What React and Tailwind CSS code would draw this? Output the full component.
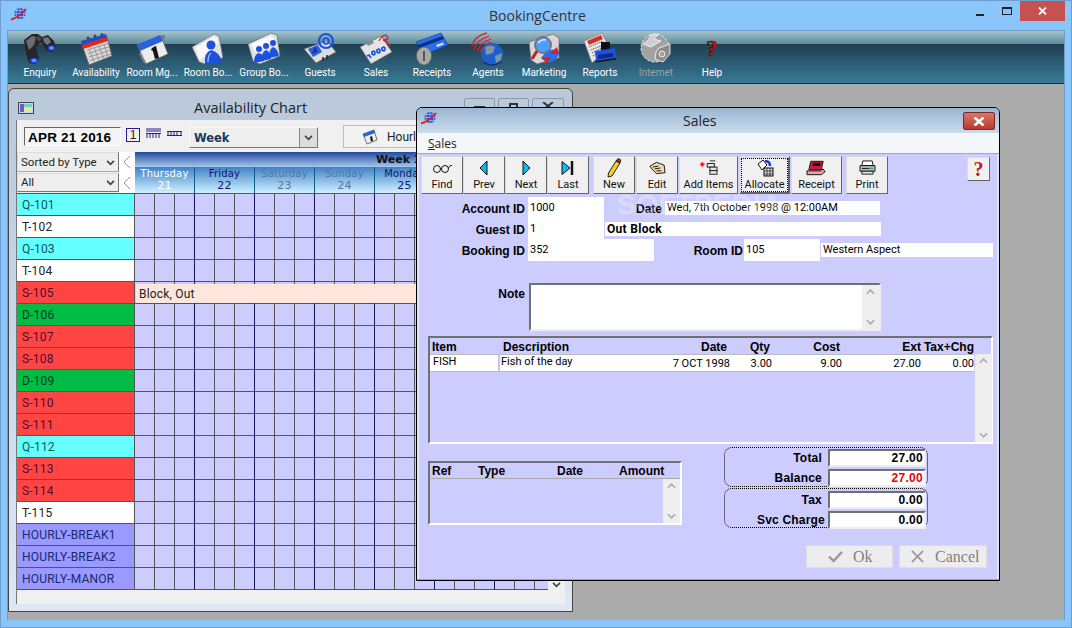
import React from 'react';

const Logo = ({ className = 'w-[18px] h-[14px]' }) => (
  <svg viewBox="0 0 18 14" className={className}>
    <circle cx="10" cy="6" r="5.5" fill="#2a4fd0" />
    <path d="M5 3h10M4.5 6h11M5 9h10M10 .5v11M7 1.5q-2 4.500 0 9M13 1.500q2 4.500 0 9" stroke="#a8c8ff" strokeWidth=".7" fill="none" />
    <path d="M1 13 Q9 11 17 2 L15 1 Q9 9 1 11z" fill="#e02020" />
  </svg>
);

const Binoculars = () => (
  <svg viewBox="0 0 34 34" className="w-[34px] h-[34px]">
    <path d="M1 8 L9 2 L15 2 L19 5 L25 3 L31 9 L33 16 L29 20 L24 19 L20 12 L17 11 L13 15 L16 27 L12 32 L6 31 L3 22z" fill="#26262a" />
    <path d="M3 9 L9 4 L13 5 L11 13 L6 18z" fill="#6c6c74" />
    <path d="M20 6 L25 5 L28 10 L24 13 L21 10z" fill="#74747c" />
    <path d="M14 4 L19 6 L17 9 L14 8z" fill="#4a4a50" />
    <ellipse cx="28.500" cy="16" rx="3.800" ry="2.800" fill="#1f4fe0" />
    <ellipse cx="28.500" cy="16" rx="1.800" ry="1.300" fill="#84a8ff" />
    <ellipse cx="11" cy="28.500" rx="4.200" ry="2.800" fill="#1f4fe0" />
    <ellipse cx="11" cy="28.500" rx="2" ry="1.300" fill="#84a8ff" />
  </svg>
);

const CalendarIcon = () => (
  <svg viewBox="0 0 34 34" className="w-[34px] h-[34px]">
    <path d="M3 13 L28 5 L33 24 L10 33z" fill="#d8d8d8" stroke="#555" strokeWidth=".8" />
    <path d="M3 13 L28 5 L29 9 L4 17z" fill="#e02818" />
    <path d="M2 9 L27 2 L28 5 L3 13z" fill="#2449c8" />
    <path d="M8 18 L30 11M9 21.500 L31 14.500M10 25 L32 18M11 28.500 L32 22M10 17 L15 30M15 15.500 L20 28.500M20 14 L25 27M25 12.500 L29 25" stroke="#8a8a8a" strokeWidth=".8" />
    <circle cx="9" cy="6" r="1.500" fill="#444" /><circle cx="16" cy="4" r="1.500" fill="#444" /><circle cx="23" cy="2.500" r="1.500" fill="#444" />
  </svg>
);

const RoomMgrIcon = () => (
  <svg viewBox="0 0 34 34" className="w-[34px] h-[34px]">
    <path d="M2 13 L26 4 L33 22 L11 32z" fill="#ececec" stroke="#555" strokeWidth=".8" />
    <path d="M2 13 L25 3 L28 9 L5 19z" fill="#2a5fe0" />
    <path d="M17 16 L21 14 L24 26 L20 27z" fill="#151515" />
    <path d="M16 17 L21 14 L21 17 L17 19z" fill="#151515" />
    <circle cx="28" cy="5" r="2" fill="#777" />
    <path d="M5 21 L10 31" stroke="#888" strokeWidth="2" />
  </svg>
);

const RoomBookIcon = () => (
  <svg viewBox="0 0 34 34" className="w-[34px] h-[34px]">
    <path d="M1 15 L23 2 L28 4 L32 26 L14 32 L8 30z" fill="#e2e2e2" stroke="#666" strokeWidth=".7" />
    <path d="M4 16 L22 5 L26 6 L27 12 L9 28z" fill="#f8f8f8" />
    <circle cx="20" cy="13" r="4.500" fill="#1c52e0" />
    <path d="M14 32 Q13 20 20 18 Q28 20 31 29 Q24 33 14 32z" fill="#1c52e0" />
    <path d="M17 30 Q17 23 20 21" stroke="#8fb4ff" strokeWidth="1.500" fill="none" />
  </svg>
);

const GroupIcon = () => (
  <svg viewBox="0 0 34 34" className="w-[34px] h-[34px]">
    <path d="M1 12 L24 1 L30 3 L33 24 L13 32 L6 29z" fill="#e2e2e2" stroke="#666" strokeWidth=".7" />
    <path d="M4 12 L23 4 L27 6 L28 10 L8 20z" fill="#fafafa" />
    <circle cx="12" cy="17" r="3" fill="#1c52e0" /><path d="M7 31 Q7 22 12 21 Q17 22 17 29z" fill="#1c52e0" />
    <circle cx="19" cy="14" r="3" fill="#1c52e0" /><path d="M15 29 Q14 20 19 18 Q24 20 24 27z" fill="#1c52e0" />
    <circle cx="26" cy="11" r="3" fill="#1c52e0" /><path d="M22 26 Q22 17 26 15 Q31 17 32 24z" fill="#1c52e0" />
  </svg>
);

const GuestsIcon = () => (
  <svg viewBox="0 0 34 34" className="w-[34px] h-[34px]">
    <path d="M1 17 L24 9 L33 20 L13 31z" fill="#dcdcdc" stroke="#666" strokeWidth=".7" />
    <path d="M5 17 L15 13 L19 20 L10 25z" fill="#2a5fe0" />
    <path d="M9 22 L12 14 L15 20z" fill="#123a9c" />
    <circle cx="23" cy="9" r="7" fill="none" stroke="#1c52e0" strokeWidth="2.200" />
    <circle cx="23" cy="9" r="2.800" fill="none" stroke="#1c52e0" strokeWidth="1.800" />
    <path d="M20 25 v4M24 23 v4" stroke="#222" strokeWidth="1.500" />
  </svg>
);

const SalesIcon = () => (
  <svg viewBox="0 0 34 34" className="w-[34px] h-[34px]">
    <path d="M1 15 L22 4 L33 20 L12 32z" fill="#e4e4e4" stroke="#666" strokeWidth=".7" />
    <path d="M7 11 L13 8 L15 11 L9 14z" fill="#888" />
    <path d="M8 24 l2-1 2 3M13 20 q3-2 3 1 t-3 1zM18 18 q3-2 3 1 t-3 1zM23 16 q3-2 3 1 t-3 1z" stroke="#1c52e0" strokeWidth="1.700" fill="none" />
    <path d="M20 9 Q24 1 28 4 Q31 8 24 8 Q29 9 31 15" stroke="#d82020" strokeWidth="1.300" fill="none" />
  </svg>
);

const ReceiptsIcon = () => (
  <svg viewBox="0 0 34 34" className="w-[34px] h-[34px]">
    <path d="M1 10 L26 1 L33 13 L9 23z" fill="#2a6fe8" stroke="#123a9c" strokeWidth=".6" />
    <path d="M2.500 13 L27.500 4 L29 7 L4 16z" fill="#0d2f80" />
    <path d="M21 13 l7-2.500 1 2-7 2.500z" fill="#cfe0ff" />
    <ellipse cx="9" cy="24" rx="7.500" ry="9" fill="#a8a8a8" stroke="#666" strokeWidth=".7" />
    <path d="M9 19 v10" stroke="#555" strokeWidth="2" />
  </svg>
);

const AgentsIcon = () => (
  <svg viewBox="0 0 34 34" className="w-[34px] h-[34px]">
    <path d="M1 14 Q3 4 16 1M3 17 Q6 8 18 4M6 19 Q9 11 20 7M9 20 Q12 13 20 10" stroke="#e02020" strokeWidth="1.300" fill="none" />
    <circle cx="21" cy="22" r="11" fill="#1f5fc8" />
    <path d="M14 15 Q20 12 24 15 L22 21 L15 23z" fill="#7f95a8" />
    <path d="M24 24 L31 21 L30 28 L25 31z" fill="#7f95a8" />
    <path d="M12 30 Q21 36 30 30" stroke="#0c2f78" strokeWidth="1.500" fill="none" />
  </svg>
);

const MarketingIcon = () => (
  <svg viewBox="0 0 34 34" className="w-[34px] h-[34px]">
    <path d="M2 10 L26 2 L32 6 L32 26 L10 32 L4 28z" fill="#d8d8d8" stroke="#666" strokeWidth=".7" />
    <circle cx="16" cy="13" r="8" fill="#4f9dff" stroke="#777" strokeWidth="2" />
    <path d="M11 11 Q14 7 19 8" stroke="#cfe6ff" strokeWidth="1.500" fill="none" />
    <path d="M10 19 L5 27" stroke="#c02020" strokeWidth="3" />
    <path d="M14 26 Q22 14 32 19 Q33 27 22 31z" fill="#2a6fe8" />
    <path d="M22 22 L30 15 L32 22z" fill="#e02020" />
    <path d="M14 26 L20 31 L24 25z" fill="#e02020" />
  </svg>
);

const ReportsIcon = () => (
  <svg viewBox="0 0 34 34" className="w-[34px] h-[34px]">
    <path d="M1 9 L19 1 L26 15 L9 31z" fill="#e8e8e8" stroke="#777" strokeWidth=".7" />
    <path d="M4 9 L18 3 L20 7 L6 13z" fill="#d03030" />
    <path d="M6 15 L20 9M8 18 L20 13M9 21 L19 16M10 24 L16 20" stroke="#777" strokeWidth="1.200" strokeDasharray="1.500 .7" />
    <rect x="18" y="10" width="9" height="8" fill="#111" />
    <path d="M12 19 L32 16 L33 26 L13 29z" fill="#2050e0" />
    <path d="M15 23 L30 21 L30 25 L15 27z" fill="#0c2a8a" />
    <path d="M13 29 L33 26 L33 27.500 L13 30.500z" fill="#111" />
  </svg>
);

const InternetIcon = () => (
  <svg viewBox="0 0 34 34" className="w-[34px] h-[34px]">
    <circle cx="16" cy="16" r="14" fill="#a2a2a2" stroke="#fff" strokeWidth=".8" strokeDasharray="3 1.500" />
    <path d="M4 12 Q10 9 12 3 L20 2 L15 7 L22 9 L12 15z" fill="#cfcfcf" stroke="#fff" strokeWidth=".7" />
    <path d="M20 16 L31 12 L31 22 L24 30 L16 27 L17 20z" fill="#8c8c8c" stroke="#fff" strokeWidth=".8" />
    <circle cx="23" cy="22" r="3" fill="#a2a2a2" stroke="#fff" strokeWidth=".8" />
  </svg>
);

const HelpBigIcon = () => (
  <svg viewBox="0 0 34 34" className="w-[34px] h-[34px]">
    <text x="17" y="24" textAnchor="middle" fontSize="24" fontWeight="700" fontFamily="Liberation Serif, serif" fill="#c81818" stroke="#300" strokeWidth=".5">?</text>
  </svg>
);

const mainTools = [
  { label: 'Enquiry', Icon: Binoculars },
  { label: 'Availability', Icon: CalendarIcon },
  { label: 'Room Mg...', Icon: RoomMgrIcon },
  { label: 'Room Bo...', Icon: RoomBookIcon },
  { label: 'Group Bo...', Icon: GroupIcon },
  { label: 'Guests', Icon: GuestsIcon },
  { label: 'Sales', Icon: SalesIcon },
  { label: 'Receipts', Icon: ReceiptsIcon },
  { label: 'Agents', Icon: AgentsIcon },
  { label: 'Marketing', Icon: MarketingIcon },
  { label: 'Reports', Icon: ReportsIcon },
  { label: 'Internet', Icon: InternetIcon, disabled: true },
  { label: 'Help', Icon: HelpBigIcon }
];

const rooms = [
  { name: 'Q-101', row: 'bg-[#66ffff] text-[#005a5a]' },
  { name: 'T-102', row: 'bg-white text-[#222]' },
  { name: 'Q-103', row: 'bg-[#66ffff] text-[#005a5a]' },
  { name: 'T-104', row: 'bg-white text-[#222]' },
  { name: 'S-105', row: 'bg-[#ff4444] text-[#4a1030]', block: true },
  { name: 'D-106', row: 'bg-[#00bb44] text-[#003a20]' },
  { name: 'S-107', row: 'bg-[#ff4444] text-[#4a1030]' },
  { name: 'S-108', row: 'bg-[#ff4444] text-[#4a1030]' },
  { name: 'D-109', row: 'bg-[#00bb44] text-[#003a20]' },
  { name: 'S-110', row: 'bg-[#ff4444] text-[#4a1030]' },
  { name: 'S-111', row: 'bg-[#ff4444] text-[#4a1030]' },
  { name: 'Q-112', row: 'bg-[#66ffff] text-[#005a5a]' },
  { name: 'S-113', row: 'bg-[#ff4444] text-[#4a1030]' },
  { name: 'S-114', row: 'bg-[#ff4444] text-[#4a1030]' },
  { name: 'T-115', row: 'bg-white text-[#222]' },
  { name: 'HOURLY-BREAK1', row: 'bg-[#9999ff] text-[#1a2a70]' },
  { name: 'HOURLY-BREAK2', row: 'bg-[#9999ff] text-[#1a2a70]' },
  { name: 'HOURLY-MANOR', row: 'bg-[#9999ff] text-[#1a2a70]' }
];

const days = [
  { name: 'Thursday', num: '21', cls: 'text-white' },
  { name: 'Friday', num: '22', cls: 'text-[#14146a]' },
  { name: 'Saturday', num: '23', cls: 'text-[#55779f]' },
  { name: 'Sunday', num: '24', cls: 'text-[#55779f]' },
  { name: 'Monday', num: '25', cls: 'text-[#14146a]' },
  { name: 'Tuesday', num: '26', cls: 'text-[#14146a]' },
  { name: 'Wednesday', num: '27', cls: 'text-[#14146a]' }
];

const cells = Array.from({ length: 21 }, (_, i) => i);

const Chevron = ({ className = '' }) => (
  <svg viewBox="0 0 10 7" className={`w-[9px] h-[6px] ${className}`}>
    <path d="M1 1 L5 5 L9 1" stroke="#444" strokeWidth="2" fill="none" />
  </svg>
);

const RoomRow = ({ room }) => (
  <div className="flex h-[22px] relative">
    <div className={`w-[118px] shrink-0 h-full border-b border-r border-[#555] pl-[5px] flex items-center text-[12px] tracking-[.2px] font-['Roboto',sans-serif] ${room.row}`}>
      {room.name}
    </div>
    {cells.map((c) => (
      <div
        key={c}
        className={`w-[20px] shrink-0 h-full bg-[#ccccff] border-b border-b-[#555] border-r ${c % 3 === 2 ? 'border-r-[#14145a]' : 'border-r-[#555]'}`}
      />
    ))}
    {room.block && (
      <div className="absolute left-[119px] top-[2px] w-[300px] h-[19px] bg-[#ffe6dc] pl-[3px] text-[12px] tracking-[.2px] text-[#222] flex items-center font-['Roboto',sans-serif]">
        Block, Out
      </div>
    )}
  </div>
);

const AvailabilityWindow = () => (
  <div className="absolute left-0 top-[4px] w-[565px] h-[524px] border border-[#444] rounded-t-[6px] bg-linear-to-b from-[#b9c9da] to-[#dde8f4] flex flex-col">
    <div className="h-[31px] flex relative shrink-0">
      <svg viewBox="0 0 16 12" className="w-[16px] h-[12px] ml-[9px] mt-[13px]">
        <rect x=".5" y=".5" width="15" height="11" fill="#c8d8ee" stroke="#444" />
        <rect x="2" y="2" width="4" height="8" fill="#6a5ad8" />
        <rect x="6" y="2" width="8" height="3" fill="#70d0d0" />
        <rect x="6" y="6" width="8" height="4" fill="#e8e890" />
      </svg>
      <div className="absolute left-[185px] top-[9px] text-[14.5px] leading-[20px] text-[#222] font-['Open_Sans',sans-serif]">Availability Chart</div>
      <div className="absolute left-[455px] top-[9px] flex gap-[3px]">
        <div className="w-[31px] h-[22px] border border-[#8a9aaa] rounded-[2px] flex justify-center pt-[7px]"><div className="w-[11px] h-[3px] bg-[#333]" /></div>
        <div className="w-[31px] h-[22px] border border-[#8a9aaa] rounded-[2px] flex justify-center pt-[4px]"><div className="w-[9px] h-[8px] border-2 border-[#333]" /></div>
        <div className="w-[32px] h-[22px] border border-[#8a9aaa] rounded-[2px] flex justify-center pt-[3px]">
          <svg viewBox="0 0 12 8" className="w-[12px] h-[8px]"><path d="M1 0 L11 8 M11 0 L1 8" stroke="#333" strokeWidth="2" /></svg>
        </div>
      </div>
    </div>
    <div className="ml-[7px] w-[549px] h-[484px] bg-[#f0f0f0] border-l border-[#777] flex flex-col overflow-hidden">
      {/* date / view toolbar */}
      <div className="h-[32px] shrink-0 flex items-start pt-[7px] pl-[7px]">
        <div className="w-[97px] h-[19px] border border-t-[#666] border-l-[#666] border-b-white border-r-white bg-[#f4f4f4] pl-[3px] text-[13.5px] leading-[19px] font-bold text-black tracking-[.2px] whitespace-nowrap">APR 21 2016</div>
        <div className="ml-[5px] w-[14px] h-[14px] mt-[1px] border border-[#2a1a90] flex items-center justify-center text-[12px] leading-none text-[#222]">1</div>
        <svg viewBox="0 0 15 10" className="ml-[6px] mt-[1px] w-[15px] h-[10px]">
          <path d="M0 1h15M0 3h15M0 5.500h15" stroke="#2a1a90" />
          <path d="M1 5v5M4 5v5M7 5v5M10 5v5M13 5v5" stroke="#2a1a90" />
        </svg>
        <svg viewBox="0 0 15 6" className="ml-[6px] mt-[4px] w-[15px] h-[6px]">
          <path d="M0 .5h15M0 4.500h15M1 0v5M4 0v5M7 0v5M10 0v5M14 0v5" stroke="#2a1a90" />
        </svg>
        <div className="ml-[7px] w-[129px] h-[21px] border border-t-[#f8f8f8] border-l-[#f8f8f8] border-r-[#777] border-b-[#777] bg-[#eee] flex items-center pl-[4px] pt-[2px] relative text-[11.5px] font-bold text-[#17375e] font-['DejaVu_Sans',sans-serif]">
          Week
          <div className="absolute right-0 top-0 bottom-0 w-[18px] border-l border-[#888] bg-[#ddd] flex items-center justify-center"><Chevron /></div>
        </div>
        <div className="ml-[25px] -mt-[2px] w-[90px] h-[23px] border border-[#bbb] bg-[#f2f2f2] flex items-center pl-[18px] gap-[9px] text-[12px] text-[#222] font-['Roboto',sans-serif]">
          <svg viewBox="0 0 16 16" className="w-[16px] h-[16px] shrink-0">
            <path d="M1 5 L12 1 L15 11 L5 15z" fill="#eee" stroke="#555" strokeWidth=".8" />
            <path d="M1 5 L12 1 L13 4 L2 8z" fill="#2a5fe0" />
            <path d="M8 8 l2-1 1 5-2 .500z" fill="#111" />
          </svg>
          Hourly
        </div>
      </div>

      <div className="h-[41px] shrink-0 flex">
        <div className="w-[102px] shrink-0 flex flex-col text-[11.5px] text-[#222] font-['Roboto',sans-serif]">
          <div className="h-[20px] border border-t-[#ddd] border-l-[#ddd] border-r-[#777] border-b-[#8ab0e0] bg-[#eee] flex items-center justify-between pl-[3px] pr-[3px] pt-[2px] whitespace-nowrap">Sorted by Type<Chevron /></div>
          <div className="h-[19px] mt-[1px] border border-t-[#ddd] border-l-[#ddd] border-r-[#777] border-b-[#777] bg-[#eee] flex items-center justify-between pl-[3px] pr-[3px] pt-[1px]">All<Chevron /></div>
        </div>
        <div className="w-[16px] shrink-0 bg-white flex flex-col items-center justify-around">
          <svg viewBox="0 0 8 14" className="w-[8px] h-[14px]"><path d="M7 1 L1 7 L7 13" stroke="#999" fill="none" /></svg>
          <svg viewBox="0 0 8 14" className="w-[8px] h-[14px]"><path d="M7 1 L1 7 L7 13" stroke="#999" fill="none" /></svg>
        </div>
        <div className="flex-1 flex flex-col overflow-hidden">
          <div className="h-[15px] shrink-0 bg-linear-to-b from-[#24489a] to-[#a8c8ee] pl-[241px] text-[11px] leading-[16px] font-bold text-[#111] font-['DejaVu_Sans',sans-serif] whitespace-nowrap">Week 17</div>
          <div className="h-[26px] shrink-0 flex bg-linear-to-b from-[#3e82c6] to-[#d2f2ff]">
            {days.map((d) => (
              <div key={d.num} className={`w-[60px] shrink-0 border-r border-[#0a5f8a] text-center text-[10px] leading-[12px] pt-[1px] tracking-[.2px] whitespace-nowrap font-['DejaVu_Sans',sans-serif] ${d.cls}`}>
                <div>{d.name}</div>
                <div className="text-[11px]">{d.num}</div>
              </div>
            ))}
          </div>
        </div>
      </div>

      <div className="flex shrink-0 h-[411px]">
        <div className="w-[531px] overflow-hidden shrink-0">
          <div className="border-t border-[#555]">
            {rooms.map((r) => (
              <RoomRow key={r.name} room={r} />
            ))}
          </div>
        </div>
        <div className="w-[17px] shrink-0 flex flex-col justify-end items-center pb-[16px]">
          <Chevron />
        </div>
      </div>
    </div>
  </div>
);

const ToolBtn = ({ w, label, focused, children }) => (
  <div className={`${w} h-[38px] shrink-0 bg-[#f0f0f0] border border-t-[#ddd] border-l-[#ddd] border-b-[#666] border-r-[#666] flex flex-col items-center text-[11px] text-[#111] font-['Roboto',sans-serif] whitespace-nowrap ${focused ? 'outline-1 outline-dotted outline-black -outline-offset-3 border-[#555] border-2' : ''}`}>
    <div className={`${focused ? 'h-[20px]' : 'h-[21px]'} flex items-center justify-center shrink-0`}>{children}</div>
    <div className="leading-[13px]">{label}</div>
  </div>
);

const Glasses = () => (
  <svg viewBox="0 0 20 12" className="w-[20px] h-[12px]">
    <circle cx="5" cy="7" r="3.500" fill="none" stroke="#111" /><circle cx="13" cy="7" r="3.500" fill="none" stroke="#111" />
    <path d="M8.500 7 Q9 5.500 9.500 7 M16.500 6 L19 3 L20 4" stroke="#111" fill="none" />
  </svg>
);

const PrevIcon = () => (
  <svg viewBox="0 0 10 16" className="w-[10px] h-[16px]"><path d="M8 1 L1 8 L8 15z" fill="#14b8f0" stroke="#111" /></svg>
);
const NextIcon = () => (
  <svg viewBox="0 0 10 16" className="w-[10px] h-[16px]"><path d="M2 1 L9 8 L2 15z" fill="#14b8f0" stroke="#111" /></svg>
);
const LastIcon = () => (
  <svg viewBox="0 0 14 16" className="w-[14px] h-[16px]"><path d="M1 1.500 L9 8 L1 14.500z" fill="#14b8f0" stroke="#111" /><path d="M11 1v14" stroke="#111" strokeWidth="2.500" /></svg>
);
const Pencil = () => (
  <svg viewBox="0 0 14 20" className="w-[14px] h-[20px]">
    <path d="M9 3 L13 5 L5 18 L1 19 L1.500 15z" fill="#f0d020" stroke="#111" strokeWidth=".9" />
    <path d="M9 3 L11 .5 L14 2 L13 5z" fill="#a03030" stroke="#111" strokeWidth=".8" />
  </svg>
);
const EditHand = () => (
  <svg viewBox="0 0 18 14" className="w-[17px] h-[14px]">
    <path d="M1 5 L8 1 L16 4 L17 12 L8 13 L3 8z" fill="#f4d8b0" stroke="#111" />
    <path d="M4 6 L10 5 M6 8 L12 7 M8 10 L13 10" stroke="#111" />
  </svg>
);
const AddItemsIcon = () => (
  <svg viewBox="0 0 22 18" className="w-[20px] h-[16px]">
    <path d="M1 5h5M3.500 2.500v5" stroke="#e01818" strokeWidth="2" />
    <rect x="9" y="4" width="8" height="4" fill="#e8e8e8" stroke="#111" />
    <rect x="12" y="8" width="8" height="4" fill="#e8e8e8" stroke="#111" />
    <rect x="12" y="12" width="8" height="4" fill="#e8e8e8" stroke="#111" />
    <path d="M12 1h6" stroke="#111" />
  </svg>
);
const AllocateIcon = () => (
  <svg viewBox="0 0 18 18" className="w-[18px] h-[18px]">
    <path d="M2 5 L7 1 L11 6 L6 11z" fill="#fff" stroke="#111" />
    <path d="M9 2 Q14 2 14 7" stroke="#1040e0" strokeWidth="2.500" fill="none" />
    <rect x="8" y="9" width="9" height="8" fill="#e0e0e0" stroke="#111" />
    <path d="M8 12h9M8 15h9M11 9v8M14 9v8" stroke="#111" strokeWidth=".7" />
  </svg>
);
const ReceiptIcon = () => (
  <svg viewBox="0 0 22 16" className="w-[21px] h-[16px]">
    <path d="M5 1 L18 1 L16 10 L3 10z" fill="#d81838" stroke="#111" />
    <rect x="7" y="2.500" width="8" height="3.500" fill="#111" />
    <path d="M1 11 L15 11 L18 9 L20 12 L16 15 L1 15z" fill="#f0a0a8" stroke="#111" />
  </svg>
);
const PrintIcon = () => (
  <svg viewBox="0 0 18 16" className="w-[17px] h-[15px]">
    <path d="M4 1 L14 1 L15 6 L3 6z" fill="#fff" stroke="#111" />
    <path d="M1 6 L17 6 L17 12 L1 12z" fill="#bbb" stroke="#111" />
    <path d="M3 9h8" stroke="#111" /><path d="M12 9h3" stroke="#20c040" strokeWidth="1.500" />
    <path d="M3 12 L15 12 L15 15 L3 15z" fill="#eee" stroke="#111" />
  </svg>
);

const Field = ({ className = '', children }) => (
  <div className={`bg-white flex items-center pl-[2px] text-[11px] text-black shrink-0 whitespace-nowrap font-['Roboto',sans-serif] ${className}`}>{children}</div>
);

const Label = ({ w, children }) => (
  <div className={`${w} shrink-0 text-right text-[12px] font-bold text-black pt-[1px]`}>{children}</div>
);

const ScrollArrows = ({ className = '' }) => (
  <div className={`w-[17px] shrink-0 bg-[#eeeeee] flex flex-col justify-between items-center py-[4px] ${className}`}>
    <svg viewBox="0 0 10 6" className="w-[9px] h-[6px]"><path d="M1 5 L5 1 L9 5" stroke="#aaa" strokeWidth="1.800" fill="none" /></svg>
    <svg viewBox="0 0 10 6" className="w-[9px] h-[6px]"><path d="M1 1 L5 5 L9 1" stroke="#aaa" strokeWidth="1.800" fill="none" /></svg>
  </div>
);

const Amount = ({ label, value, red, labelPr = 'pr-[6px]' }) => (
  <div className="flex items-center h-[18px]">
    <div className={`w-[103px] text-right text-[12px] font-bold tracking-[.2px] text-black whitespace-nowrap ${labelPr}`}>{label}</div>
    <div className={`w-[98px] h-full bg-white border-2 border-t-[#707070] border-l-[#707070] border-r-[#eee] border-b-[#eee] text-right pr-[1px] text-[12px] leading-[15px] font-bold tracking-[.3px] ${red ? 'text-[#ee0000]' : 'text-black'}`}>{value}</div>
  </div>
);

const SalesWindow = () => (
  <div className="absolute left-[408px] top-[23px] w-[584px] h-[474px] border border-black rounded-t-[6px] flex flex-col overflow-hidden bg-[#ccccff]">
    <div className="h-[25px] shrink-0 bg-linear-to-b from-[#9ab6d2] to-[#cadcec] flex relative">
      <Logo className="ml-[3px] mt-[3px] w-[18px] h-[15px]" />
      <div className="absolute left-[266px] top-[3px] text-[14px] leading-[20px] text-[#222] font-['Open_Sans',sans-serif]">Sales</div>
      <div className="absolute right-[4px] top-[4px] w-[32px] h-[18px] bg-linear-to-b from-[#d8766a] to-[#b83a2c] border border-[#7a2a24] rounded-[2px] flex items-center justify-center">
        <svg viewBox="0 0 12 9" className="w-[12px] h-[9px]"><path d="M1.500 .5 L10.500 8.500 M10.500 .5 L1.500 8.500" stroke="#fff" strokeWidth="2.600" /></svg>
      </div>
    </div>
    <div className="h-[21px] shrink-0 bg-[#f4f7fa] border-b border-[#aaa] pl-[11px] text-[12px] leading-[21px] text-[#222] font-['Open_Sans',sans-serif]">
      <span className="underline">S</span>ales
    </div>

    <div className="flex-1 flex flex-col border-x-2 border-x-[#dbe7f3] relative">
      <div className="absolute z-10 left-[198px] top-[37px] text-[28px] leading-[28px] font-bold tracking-[.5px] text-white/30 whitespace-nowrap pointer-events-none">SOFTPEDIA</div>
      {/* record toolbar */}
      <div className="flex pl-[2px] pt-[2px] shrink-0">
        <ToolBtn w="w-[42px]" label="Find"><Glasses /></ToolBtn>
        <ToolBtn w="w-[42px]" label="Prev"><PrevIcon /></ToolBtn>
        <ToolBtn w="w-[42px]" label="Next"><NextIcon /></ToolBtn>
        <ToolBtn w="w-[42px]" label="Last"><LastIcon /></ToolBtn>
        <div className="w-[4px] shrink-0" />
        <ToolBtn w="w-[42px]" label="New"><Pencil /></ToolBtn>
        <div className="w-[1px] shrink-0" />
        <ToolBtn w="w-[42px]" label="Edit"><EditHand /></ToolBtn>
        <div className="w-[1px] shrink-0" />
        <ToolBtn w="w-[59px]" label="Add Items"><AddItemsIcon /></ToolBtn>
        <div className="w-[1px] shrink-0" />
        <ToolBtn w="w-[51px]" label="Allocate" focused><AllocateIcon /></ToolBtn>
        <div className="w-[1px] shrink-0" />
        <ToolBtn w="w-[51px]" label="Receipt"><ReceiptIcon /></ToolBtn>
        <div className="w-[4px] shrink-0" />
        <ToolBtn w="w-[42px]" label="Print"><PrintIcon /></ToolBtn>
        <div className="ml-[79px] mt-[1px] w-[23px] h-[24px] bg-[#f0f0f0] border border-t-[#ddd] border-l-[#ddd] border-b-[#666] border-r-[#666] flex items-center justify-center text-[20px] font-bold text-[#c01818] font-['Liberation_Serif',serif]">?</div>
      </div>

      {/* account fields */}
      <div className="flex items-center h-[22px] mt-[3px] shrink-0">
        <Label w="w-[106px]">Account ID</Label>
        <Field className="ml-[3px] w-[76px] h-full items-start pt-[3px]">1000</Field>
        <Label w="w-[58px]">Date</Label>
        <Field className="ml-[3px] w-[215px] h-[14px]">Wed, 7th October 1998 @ 12:00AM</Field>
      </div>
      <div className="flex items-center h-[20px] shrink-0">
        <Label w="w-[106px]">Guest ID</Label>
        <Field className="ml-[3px] w-[76px] h-full">1</Field>
        <Field className="ml-[1px] w-[276px] h-[14px]"><span className="text-[12px] font-bold tracking-[.3px]">Out Block</span></Field>
      </div>
      <div className="flex items-center h-[22px] shrink-0">
        <Label w="w-[106px]">Booking ID</Label>
        <Field className="ml-[3px] w-[126px] h-full">352</Field>
        <Label w="w-[89px]">Room ID</Label>
        <Field className="ml-[1px] w-[76px] h-full">105</Field>
        <Field className="ml-[1px] w-[172px] h-[14px]">Western Aspect</Field>
      </div>

      {/* note */}
      <div className="flex mt-[22px] h-[48px] shrink-0">
        <div className="w-[106px] shrink-0 text-right text-[12px] font-bold text-black pt-[2px]">Note</div>
        <div className="ml-[4px] w-[352px] flex border-2 border-t-[#707070] border-l-[#707070] border-r-[#eee] border-b-[#eee] bg-white">
          <div className="flex-1" />
          <ScrollArrows />
        </div>
      </div>

      {/* sale items */}
      <div className="ml-[9px] mt-[5px] w-[565px] h-[108px] shrink-0 border-2 border-t-[#707070] border-l-[#707070] border-r-white border-b-white flex flex-col">
        <div className="h-[14px] mt-[2px] shrink-0 grid grid-cols-[70px_139px_91px_42px_70px_79px_53px] text-[12px] font-bold text-black leading-[14px] whitespace-nowrap">
          <div className="pl-[2px]">Item</div>
          <div className="pl-[3px]">Description</div>
          <div className="text-right pr-[3px]">Date</div>
          <div className="text-right pr-[2px]">Qty</div>
          <div className="text-right pr-[2px]">Cost</div>
          <div className="text-right">Ext</div>
          <div className="text-right">Tax+Chg</div>
        </div>
        <div className="flex-1 flex min-h-0">
          <div className="w-[544px] shrink-0 flex flex-col">
            <div className="h-[18px] border-y border-[#bbb] bg-white grid grid-cols-[70px_139px_91px_42px_70px_79px_53px] text-[11px] leading-[14px] text-black whitespace-nowrap font-['Roboto',sans-serif]">
              <div className="pl-[3px] border-r-2 border-[#c4c4ee]">FISH</div>
              <div className="pl-[1px]">Fish of the day</div>
              <div className="text-right pt-[2px]">7 OCT 1998</div>
              <div className="text-right pt-[2px]">3.00</div>
              <div className="text-right pt-[2px]">9.00</div>
              <div className="text-right pt-[2px]">27.00</div>
              <div className="text-right pt-[2px]">0.00</div>
            </div>
          </div>
          <ScrollArrows className="ml-[1px]" />
        </div>
      </div>

      {/* refs and totals */}
      <div className="flex ml-[9px] mt-[3px] h-[81px] shrink-0">
        <div className="w-[254px] h-[64px] mt-[14px] border-2 border-t-[#707070] border-l-[#707070] border-r-white border-b-white flex flex-col shrink-0">
          <div className="h-[16px] shrink-0 border-b border-[#aaa] grid grid-cols-[48px_68px_66px_50px] text-[12px] font-bold leading-[17px] text-black whitespace-nowrap">
            <div className="pl-[2px]">Ref</div>
            <div>Type</div>
            <div className="pl-[11px]">Date</div>
            <div className="pl-[7px]">Amount</div>
          </div>
          <div className="flex-1 flex justify-end min-h-0">
            <ScrollArrows />
          </div>
        </div>
        <div className="ml-[42px] w-[204px] flex flex-col gap-[1px]">
          <div className="h-[40px] border border-dotted border-black rounded-[8px] flex flex-col pt-[1px]">
            <Amount label="Total" value="27.00" />
            <div className="h-[2px] shrink-0" />
            <Amount label="Balance" value="27.00" red />
          </div>
          <div className="h-[40px] border border-dotted border-black rounded-[8px] flex flex-col pt-[2px]">
            <Amount label="Tax" value="0.00" />
            <div className="h-[2px] shrink-0" />
            <Amount label="Svc Charge" value="0.00" labelPr="pr-[3px]" />
          </div>
        </div>
      </div>

      {/* dialog buttons */}
      <div className="flex justify-end gap-[6px] pr-[10px] mt-[17px] shrink-0 text-[16px] font-['Liberation_Serif',serif] text-[#808080]">
        <div className="w-[87px] h-[23px] bg-[#ededed] border border-[#ddd] flex items-center pl-[21px] gap-[10px]">
          <svg viewBox="0 0 16 14" className="w-[15px] h-[13px]"><path d="M1 7 L6 12 L15 2" stroke="#999" strokeWidth="2.500" fill="none" /></svg>
          Ok
        </div>
        <div className="w-[88px] h-[23px] bg-[#ededed] border border-[#ddd] flex items-center pl-[11px] gap-[11px]">
          <svg viewBox="0 0 14 14" className="w-[13px] h-[13px]"><path d="M1 1 L13 13 M13 1 L1 13" stroke="#999" strokeWidth="1.800" /></svg>
          Cancel
        </div>
      </div>
    </div>
    <div className="h-[1px] bg-[#40c8d8] shrink-0" />
  </div>
);

export default function App() {
  return (
    <div className="w-[1072px] h-[628px] overflow-hidden bg-[#8ac5fb] border border-[#6d9fcc] flex flex-col font-['Liberation_Sans',sans-serif]">
      <div className="h-[29px] shrink-0 flex relative">
        <Logo className="ml-[9px] mt-[6px] w-[18px] h-[15px]" />
        <div className="absolute left-[488px] top-[5px] text-[14px] leading-[20px] text-[#333] font-['Open_Sans',sans-serif]">BookingCentre</div>
        <div className="absolute right-[6px] top-0 flex items-start">
          <div className="w-[26px] h-[20px] flex items-center justify-center mr-[2px]"><div className="w-[8px] h-[2px] bg-[#222] mt-[7px]" /></div>
          <div className="w-[24px] h-[20px] flex items-center justify-center mr-[1px]"><div className="w-[10px] h-[8px] border border-t-2 border-[#222]" /></div>
          <div className="w-[45px] h-[20px] bg-[#c75050] flex items-center justify-center">
            <svg viewBox="0 0 9 8" className="w-[9px] h-[8px]"><path d="M1 .5 L8 7.500 M8 .5 L1 7.500" stroke="#fff" strokeWidth="1.800" /></svg>
          </div>
        </div>
      </div>
      <div className="mx-[6px] flex-1 flex flex-col border-x border-t border-[#6d9fcc] mb-[7px]">
        <div className="h-[53px] shrink-0 flex pl-[4px] bg-[linear-gradient(to_bottom,#a6c3c9_0,#5c8a9e_13px,#1f3e4f_13px,#3a7a98_52px)] border-b border-[#123040] font-['Roboto',sans-serif]">
          {mainTools.map(({ label, Icon, disabled }) => (
            <div key={label} className="w-[56px] shrink-0 flex flex-col items-center pt-[1px]">
              <div className="h-[34px] shrink-0"><Icon /></div>
              <div className={`text-[10px] leading-[14px] whitespace-nowrap ${disabled ? 'text-[#9aa4aa]' : 'text-white'}`}>{label}</div>
            </div>
          ))}
        </div>
        <div className="flex-1 bg-[#ababab] relative">
          <AvailabilityWindow />
          <SalesWindow />
        </div>
      </div>
    </div>
  );
}
